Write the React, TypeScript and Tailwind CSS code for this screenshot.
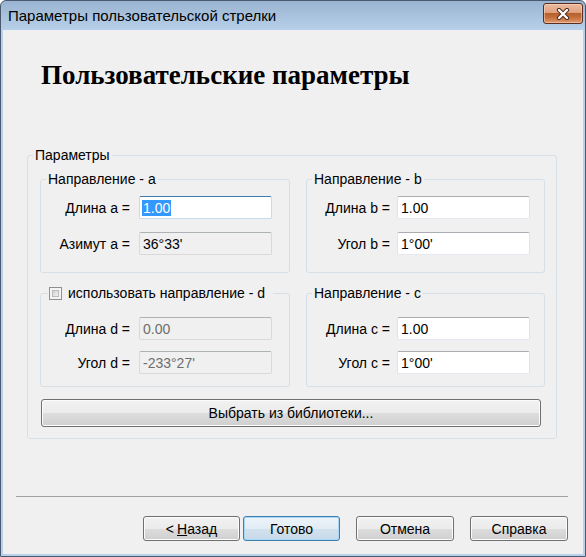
import React from 'react';

const ui = { fontFamily: '"Liberation Sans", Arial, sans-serif' };

function Field({ value, variant = 'normal', selected = false }: { value: string; variant?: 'normal' | 'readonly' | 'disabled' | 'focus'; selected?: boolean }) {
    const box =
        variant === 'focus'
            ? 'bg-white border-[#c5daed] border-t-[#3d7bad]'
            : variant === 'normal'
            ? 'bg-white border-[#e2e3ea] border-t-[#abadb3] border-b-[#e3e9ef]'
            : 'bg-[#f0f0f0] border-[#d9d9d9] border-t-[#adb2b5]';
    const txt = variant === 'disabled' ? 'text-[#6d6d6d]' : 'text-black';
    return (
        <div className={`h-[23px] w-[133px] border rounded-[2px] px-[2px] flex items-center text-[14px] leading-[16px] ${box} ${txt}`}>
            {selected ? <span className="bg-[#3399ff] text-white px-[1px]">{value}</span> : <span className="px-[1px]">{value}</span>}
        </div>
    );
}

function Group({ title, rows, wide, checkbox = false, second = false }: {
    title: string;
    rows: { label: string; value: string; variant?: 'normal' | 'readonly' | 'disabled' | 'focus'; selected?: boolean }[];
    wide: boolean;
    checkbox?: boolean;
    second?: boolean;
}) {
    return (
        <fieldset className={`border border-[#d5dfe5] rounded-[3px] ${wide ? 'w-[250px]' : 'w-[239px]'}`}>
            <legend className={`leading-[16px] flex items-center ${checkbox ? 'ml-[7px] pl-[1px] pr-[8px]' : 'ml-[5px] px-[2px]'}`}>
                {checkbox && (
                    <span className="w-[13px] h-[13px] border border-[#8f8f8f] bg-[#f4f4f4] mr-[6px] flex p-[2px]">
                        <span className="flex-1 border border-[#bcbcbc] bg-gradient-to-br from-[#cfcfcf] to-[#f4f4f4]" />
                    </span>
                )}
                {title}
            </legend>
            <div
                className={`grid ${wide ? 'grid-cols-[89px_133px] gap-x-[9px]' : 'grid-cols-[83px_133px] gap-x-[7px]'} items-center ${
                    second ? 'pt-[16px] pb-[12px] gap-y-[11px]' : 'pt-[9px] pb-[17px] gap-y-[13px]'
                }`}
            >
                {rows.map((r) => (
                    <React.Fragment key={r.label}>
                        <span className="text-right leading-[16px]">{r.label}</span>
                        <Field value={r.value} variant={r.variant} selected={r.selected} />
                    </React.Fragment>
                ))}
            </div>
        </fieldset>
    );
}

function WinButton({ children, primary = false, className = '' }: { children: React.ReactNode; primary?: boolean; className?: string }) {
    return (
        <button
            className={`rounded-[3px] border text-[14px] leading-[16px] text-black flex items-center justify-center ${
                primary
                    ? 'border-[#3c7fb1] bg-[linear-gradient(#edf4fa_0%,#e2ecf5_50%,#d2e1ed_51%,#c8d9e8_100%)] shadow-[inset_0_0_0_1px_#a8d8f6]'
                    : 'border-[#707070] bg-[linear-gradient(#f2f2f2_0%,#ebebeb_50%,#dddddd_51%,#cfcfcf_100%)] shadow-[inset_0_0_0_1px_#fcfcfc]'
            } ${className}`}
        >
            {children}
        </button>
    );
}

export default function App() {
    return (
        <div className="w-[586px] h-[557px] flex flex-col rounded-t-[6px] border border-[#4a5a6e] bg-[linear-gradient(#99b4d1_0px,#b9d1ea_30px,#b9d1ea_100%)]" style={ui}>
            {/* title bar */}
            <div className="h-[29px] flex items-center justify-between pl-[7px] pr-[2px] shrink-0">
                <span className="text-[15px] leading-[18px] text-black mt-[1px]">Параметры пользовательской стрелки</span>
                <div className="w-[40px] h-[21px] -mt-[4px] rounded-[3px] border border-[#5b2d20] bg-[linear-gradient(#ecbca3_0%,#e0a07e_45%,#b5602f_50%,#c46d3b_70%,#dd9d6e_100%)] shadow-[inset_0_0_0_1px_rgba(255,220,200,0.5)] flex items-center justify-center">
                    <svg width="14" height="12" viewBox="0 0 14 12">
                        <path d="M3 2 L11 10 M11 2 L3 10" stroke="#4a2418" strokeWidth="4.2" strokeLinecap="round" />
                        <path d="M3 2 L11 10 M11 2 L3 10" stroke="#ffffff" strokeWidth="2.4" strokeLinecap="round" />
                    </svg>
                </div>
            </div>

            {/* client area */}
            <div className="flex-1 mx-[2px] mb-[2px] bg-[#f0f0f0] flex flex-col text-[14px] text-black">
                <h1 className="mt-[30px] ml-[38px] text-[27px] leading-[30px] font-bold" style={{ fontFamily: '"Liberation Serif", "Times New Roman", serif' }}>
                    Пользовательские параметры
                </h1>

                <fieldset className="mt-[57px] ml-[24px] w-[530px] border border-[#d5dfe5] rounded-[3px]">
                    <legend className="ml-[5px] px-[2px] leading-[16px]">Параметры</legend>
                    <div className="pl-[12px] pr-[11px] pb-[11px]">
                        <div className="grid grid-cols-[250px_239px] gap-x-[16px] gap-y-[12px] pt-[8px]">
                            <Group
                                title="Направление - a"
                                wide
                                rows={[
                                    { label: 'Длина a =', value: '1.00', variant: 'focus', selected: true },
                                    { label: 'Азимут a =', value: '36°33\'', variant: 'readonly' },
                                ]}
                            />
                            <Group
                                title="Направление - b"
                                wide={false}
                                rows={[
                                    { label: 'Длина b =', value: '1.00' },
                                    { label: 'Угол b =', value: '1°00\'' },
                                ]}
                            />
                            <Group
                                title="использовать направление - d"
                                wide
                                checkbox
                                second
                                rows={[
                                    { label: 'Длина d =', value: '0.00', variant: 'disabled' },
                                    { label: 'Угол d =', value: '-233°27\'', variant: 'disabled' },
                                ]}
                            />
                            <Group
                                title="Направление - c"
                                wide={false}
                                second
                                rows={[
                                    { label: 'Длина c =', value: '1.00' },
                                    { label: 'Угол c =', value: '1°00\'' },
                                ]}
                            />
                        </div>
                        <WinButton className="mt-[12px] ml-[1px] w-[500px] h-[28px]">Выбрать из библиотеки...</WinButton>
                    </div>
                </fieldset>

                <div className="mt-[57px] ml-[13px] w-[552px] h-px bg-[#a0a0a0]" />

                <div className="mt-[19px] flex pl-[140px]">
                    <WinButton className="w-[97px] h-[25px]">
                        &lt; <span className="underline ml-[3px]">Н</span>азад
                    </WinButton>
                    <WinButton primary className="ml-[3px] w-[97px] h-[25px]">
                        Готово
                    </WinButton>
                    <WinButton className="ml-[16px] w-[98px] h-[25px]">Отмена</WinButton>
                    <WinButton className="ml-[16px] w-[98px] h-[25px]">Справка</WinButton>
                </div>
            </div>
        </div>
    );
}
